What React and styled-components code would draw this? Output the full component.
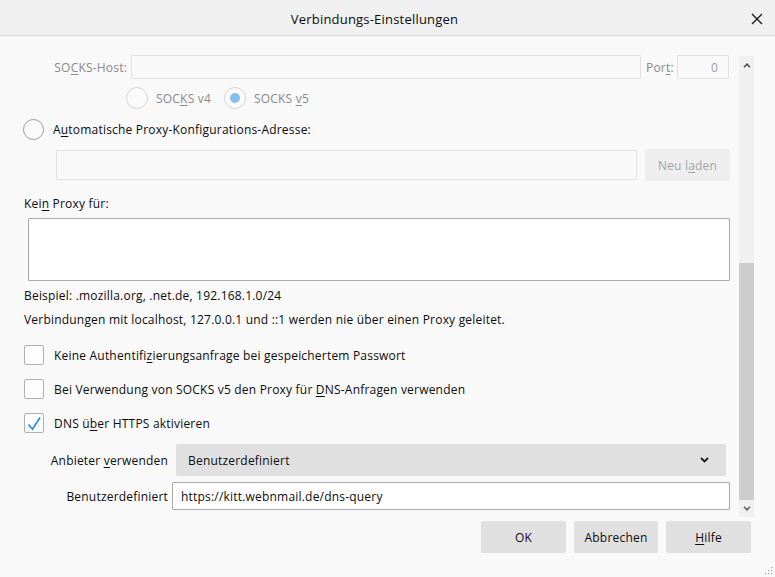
import React from "react";
import styled, { createGlobalStyle } from "styled-components";

const GlobalStyle = createGlobalStyle`
  html, body { margin: 0; padding: 0; background: #f9f9fa; }
  body {
    font-family: "Open Sans", "Noto Sans", sans-serif;
    font-size: 12px;
    letter-spacing: 0.2px;
    color: #0c0c0d;
  }
  * { box-sizing: border-box; }
`;

const Dialog = styled.div`
  width: 775px;
  height: 577px;
  display: flex;
  flex-direction: column;
  position: relative;
  overflow: hidden;
  background: #f9f9fa;
`;

const TitleBar = styled.header`
  height: 36px;
  flex: none;
  display: flex;
  align-items: center;
  background: #f0f0f0;
  border-bottom: 1px solid #d9d9d9;
`;

const Title = styled.div`
  flex: 1;
  text-align: center;
  font-size: 13px;
  letter-spacing: 0.2px;
  padding-top: 2px;
`;

const CloseButton = styled.div`
  width: 16px;
  height: 16px;
  margin-right: 10px;
  margin-top: 2px;
  display: flex;
  align-items: center;
  justify-content: center;
`;

const Main = styled.div`
  height: 481px;
  flex: none;
  display: flex;
`;

const Content = styled.div`
  flex: 1;
  padding-top: 19px;
  display: flex;
  flex-direction: column;
  overflow: hidden;
`;

const Scrollbar = styled.div`
  width: 15px;
  height: 461px;
  margin: 20px 21px 0 0;
  background: #f0f0f0;
  display: flex;
  flex-direction: column;
`;

const ArrowCell = styled.div`
  height: ${(p) => p.$h}px;
  flex: none;
  display: flex;
  align-items: center;
  justify-content: center;
`;

const TrackSpace = styled.div`
  flex: 1;
`;

const Thumb = styled.div`
  height: 237px;
  flex: none;
  background: #cdcdcd;
`;

const HostRow = styled.div`
  height: 24px;
  display: flex;
  align-items: center;
  padding-left: 44px;
  padding-right: 10px;
`;

const DisabledLabel = styled.span`
  color: #8a8a8c;
  width: ${(p) => (p.$w ? `${p.$w}px` : "auto")};
  text-align: ${(p) => p.$align || "right"};
  white-space: nowrap;
  flex: none;
  margin-right: ${(p) => p.$mr || 0}px;
`;

const DisabledInput = styled.div`
  height: 24px;
  border: 1px solid #e1e1e2;
  border-radius: 1px;
  background: #f9f9fa;
  flex: ${(p) => (p.$w ? "none" : "1")};
  width: ${(p) => (p.$w ? `${p.$w}px` : "auto")};
  display: flex;
  align-items: center;
  justify-content: flex-end;
  padding-right: 10px;
  color: #a0a0a2;
  margin-right: ${(p) => p.$mr || 0}px;
`;

const RadioRow = styled.div`
  margin-top: ${(p) => p.$mt}px;
  height: 22px;
  display: flex;
  align-items: center;
  padding-left: ${(p) => p.$pl}px;
  gap: 13px;
`;

const RadioOption = styled.label`
  display: flex;
  align-items: center;
  gap: ${(p) => p.$gap || 8}px;
  color: ${(p) => (p.$disabled ? "#8a8a8c" : "#0c0c0d")};
`;

const RadioCircle = styled.span`
  width: ${(p) => p.$size}px;
  height: ${(p) => p.$size}px;
  border-radius: 50%;
  border: 1px solid ${(p) => (p.$disabled ? "#d4d4d6" : "#9a9a9c")};
  background: #fbfbfb;
  display: flex;
  align-items: center;
  justify-content: center;
  flex: none;
`;

const RadioDot = styled.span`
  width: 10px;
  height: 10px;
  border-radius: 50%;
  background: #83c1ea;
`;

const UrlRow = styled.div`
  margin-top: 9px;
  height: 32px;
  display: flex;
  align-items: center;
  gap: 8px;
  padding-left: 56px;
  padding-right: 9px;
`;

const UrlInput = styled.div`
  flex: 1;
  height: 30px;
  border: 1px solid #e1e1e2;
  border-radius: 1px;
  background: #f9f9fa;
`;

const Button = styled.button`
  width: ${(p) => p.$w}px;
  height: 32px;
  flex: none;
  border: none;
  border-radius: 2px;
  background: ${(p) => (p.$disabled ? "#eeeeef" : "#e0e0e1")};
  color: ${(p) => (p.$disabled ? "#a3a3a5" : "#0c0c0d")};
  font-family: inherit;
  font-size: 12px;
  letter-spacing: 0.2px;
  padding: 0;
`;

const TextLine = styled.div`
  margin-top: ${(p) => p.$mt}px;
  padding-left: 24px;
  line-height: 16px;
  height: 16px;
  white-space: nowrap;
`;

const TextArea = styled.div`
  margin: 6px 9px 0 28px;
  height: 63px;
  background: #ffffff;
  border: 1px solid #a9a9ab;
  border-radius: 1px;
`;

const CheckList = styled.div`
  margin-top: 15px;
  display: flex;
  flex-direction: column;
  gap: 10px;
`;

const CheckRow = styled.label`
  height: 24px;
  display: flex;
  align-items: center;
  gap: 10px;
  padding-left: 24px;
`;

const CheckBox = styled.span`
  width: 20px;
  height: 20px;
  flex: none;
  border: 1px solid #b1b1b3;
  border-radius: 2px;
  background: #fdfdfd;
  position: relative;
`;

const CheckMark = styled.svg`
  position: absolute;
  left: -1px;
  top: -1px;
`;

const DohGrid = styled.div`
  margin-top: 9px;
  display: grid;
  grid-template-columns: 168px 1fr;
  row-gap: 6px;
  align-items: center;
`;

const GridLabel = styled.span`
  justify-self: end;
  white-space: nowrap;
`;

const Select = styled.div`
  height: 32px;
  margin-left: 8px;
  margin-right: 13px;
  background: #e0e0e1;
  border-radius: 2px;
  display: flex;
  align-items: center;
  justify-content: space-between;
  padding: 0 17px 0 12px;
`;

const TextInput = styled.div`
  height: 28px;
  margin-left: 4px;
  margin-right: 9px;
  background: #ffffff;
  border: 1px solid #a9a9ab;
  border-radius: 1px;
  display: flex;
  align-items: center;
  padding-left: 8px;
`;

const Footer = styled.footer`
  flex: 1;
  display: flex;
  justify-content: flex-end;
  align-items: flex-start;
  gap: 8px;
  padding: 4px 24px 0 0;
`;

const Grip = styled.svg`
  position: absolute;
  right: 0;
  bottom: 0;
`;

const U = styled.span`
  text-decoration: underline;
  text-underline-offset: 2px;
`;

export default function App() {
  return (
    <>
      <GlobalStyle />
      <Dialog>
        <TitleBar>
          <Title>Verbindungs-Einstellungen</Title>
          <CloseButton>
            <svg width="12" height="12" viewBox="0 0 12 12">
              <path d="M1 1 L11 11 M11 1 L1 11" stroke="#1a1a1a" strokeWidth="1.4" />
            </svg>
          </CloseButton>
        </TitleBar>
        <Main>
          <Content>
            <HostRow>
              <DisabledLabel $w={83} $mr={4}>
                SO<U>C</U>KS-Host:
              </DisabledLabel>
              <DisabledInput $mr={5} />
              <DisabledLabel $w={25} $mr={6} $align="left">
                Por<U>t</U>:
              </DisabledLabel>
              <DisabledInput $w={52}>0</DisabledInput>
            </HostRow>
            <RadioRow $mt={8} $pl={126}>
              <RadioOption $disabled>
                <RadioCircle $size={22} $disabled />
                <span>
                  SOC<U>K</U>S v4
                </span>
              </RadioOption>
              <RadioOption $disabled>
                <RadioCircle $size={22} $disabled>
                  <RadioDot />
                </RadioCircle>
                <span>
                  SOCKS <U>v</U>5
                </span>
              </RadioOption>
            </RadioRow>
            <RadioRow $mt={9} $pl={23}>
              <RadioOption $gap={9}>
                <RadioCircle $size={21} />
                <span>
                  A<U>u</U>tomatische Proxy-Konfigurations-Adresse:
                </span>
              </RadioOption>
            </RadioRow>
            <UrlRow>
              <UrlInput />
              <Button $w={85} $disabled>
                Neu l<U>a</U>den
              </Button>
            </UrlRow>
            <TextLine $mt={15}>
              Kei<U>n</U> Proxy für:
            </TextLine>
            <TextArea />
            <TextLine $mt={7}>Beispiel: .mozilla.org, .net.de, 192.168.1.0/24</TextLine>
            <TextLine $mt={8}>
              Verbindungen mit localhost, 127.0.0.1 und ::1 werden nie über einen Proxy geleitet.
            </TextLine>
            <CheckList>
              <CheckRow>
                <CheckBox />
                <span>
                  Keine Authentifi<U>z</U>ierungsanfrage bei gespeichertem Passwort
                </span>
              </CheckRow>
              <CheckRow>
                <CheckBox />
                <span>
                  Bei Verwendung von SOCKS v5 den Proxy für <U>D</U>NS-Anfragen verwenden
                </span>
              </CheckRow>
              <CheckRow>
                <CheckBox>
                  <CheckMark width="20" height="20" viewBox="0 0 20 20">
                    <path d="M4.5 11.5 L8.5 16.2 L16 4.5" fill="none" stroke="#1f8ae6" strokeWidth="1.6" />
                  </CheckMark>
                </CheckBox>
                <span>
                  DNS ü<U>b</U>er HTTPS aktivieren
                </span>
              </CheckRow>
            </CheckList>
            <DohGrid>
              <GridLabel>
                Anbieter <U>v</U>erwenden
              </GridLabel>
              <Select>
                <span>Benutzerdefiniert</span>
                <svg width="9" height="6" viewBox="0 0 9 6">
                  <path d="M1 1 L4.5 4.5 L8 1" fill="none" stroke="#1a1a1a" strokeWidth="1.8" />
                </svg>
              </Select>
              <GridLabel>Benutzerdefiniert</GridLabel>
              <TextInput>https://kitt.webnmail.de/dns-query</TextInput>
            </DohGrid>
          </Content>
          <Scrollbar>
            <ArrowCell $h={19}>
              <svg width="8" height="5" viewBox="0 0 8 5">
                <path d="M1 4.2 L4 1.2 L7 4.2" fill="none" stroke="#505050" strokeWidth="1.6" />
              </svg>
            </ArrowCell>
            <TrackSpace />
            <Thumb />
            <ArrowCell $h={17}>
              <svg width="8" height="5" viewBox="0 0 8 5">
                <path d="M1 0.8 L4 3.8 L7 0.8" fill="none" stroke="#606060" strokeWidth="1.6" />
              </svg>
            </ArrowCell>
          </Scrollbar>
        </Main>
        <Footer>
          <Button $w={85}>OK</Button>
          <Button $w={84}>Abbrechen</Button>
          <Button $w={85}>
            <U>H</U>ilfe
          </Button>
        </Footer>
        <Grip width="12" height="12" viewBox="0 0 12 12">
          <g fill="#a0a0a0">
            <rect x="8" y="2" width="1.2" height="1.2" />
            <rect x="5" y="5" width="1.2" height="1.2" />
            <rect x="8" y="5" width="1.2" height="1.2" />
            <rect x="2" y="8" width="1.2" height="1.2" />
            <rect x="5" y="8" width="1.2" height="1.2" />
            <rect x="8" y="8" width="1.2" height="1.2" />
          </g>
        </Grip>
      </Dialog>
    </>
  );
}
